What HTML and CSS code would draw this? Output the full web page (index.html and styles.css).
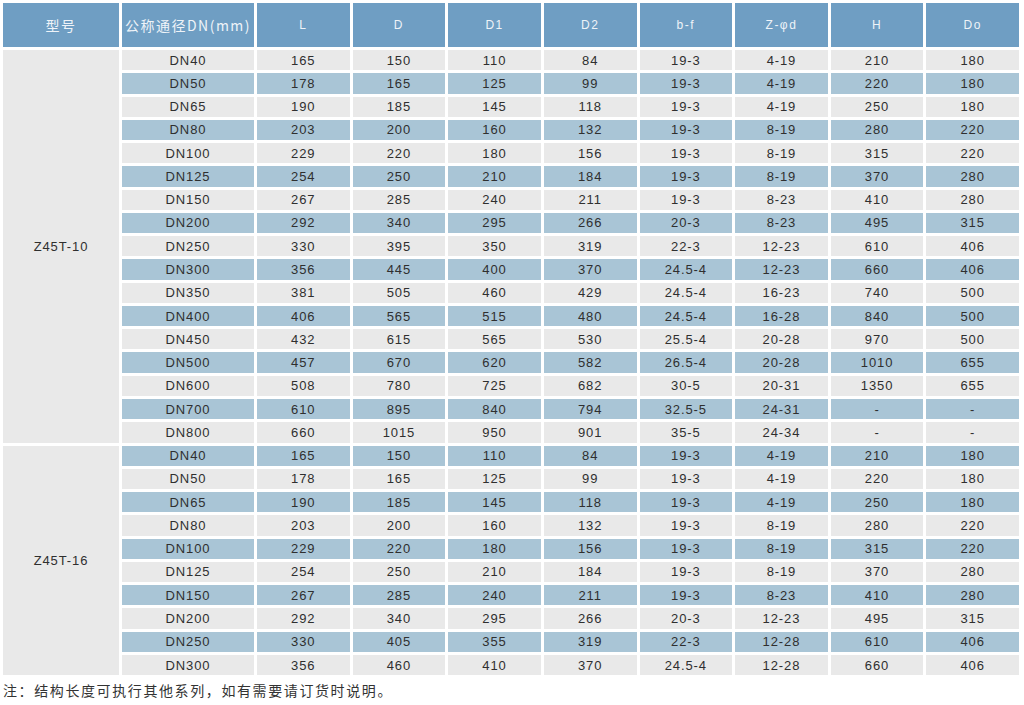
FILE: index.html
```html
<!DOCTYPE html>
<html lang="zh">
<head>
<meta charset="utf-8">
<title>Z45T 规格表</title>
<link rel="stylesheet" href="styles.css">
</head>
<body>
<table class="spec">
  <colgroup>
    <col class="c-model"><col class="c-dn">
    <col><col><col><col><col><col><col><col>
  </colgroup>
  <thead>
    <tr>
      <th class="cn">型号</th><th class="cn">公称通径DN(mm)</th>
      <th>L</th><th>D</th><th>D1</th><th>D2</th><th>b-f</th><th>Z-φd</th><th>H</th><th>Do</th>
    </tr>
  </thead>
  <tbody>
    <tr class="g"><td class="model" rowspan="17">Z45T-10</td><td>DN40</td><td>165</td><td>150</td><td>110</td><td>84</td><td>19-3</td><td>4-19</td><td>210</td><td>180</td></tr>
    <tr class="b"><td>DN50</td><td>178</td><td>165</td><td>125</td><td>99</td><td>19-3</td><td>4-19</td><td>220</td><td>180</td></tr>
    <tr class="g"><td>DN65</td><td>190</td><td>185</td><td>145</td><td>118</td><td>19-3</td><td>4-19</td><td>250</td><td>180</td></tr>
    <tr class="b"><td>DN80</td><td>203</td><td>200</td><td>160</td><td>132</td><td>19-3</td><td>8-19</td><td>280</td><td>220</td></tr>
    <tr class="g"><td>DN100</td><td>229</td><td>220</td><td>180</td><td>156</td><td>19-3</td><td>8-19</td><td>315</td><td>220</td></tr>
    <tr class="b"><td>DN125</td><td>254</td><td>250</td><td>210</td><td>184</td><td>19-3</td><td>8-19</td><td>370</td><td>280</td></tr>
    <tr class="g"><td>DN150</td><td>267</td><td>285</td><td>240</td><td>211</td><td>19-3</td><td>8-23</td><td>410</td><td>280</td></tr>
    <tr class="b"><td>DN200</td><td>292</td><td>340</td><td>295</td><td>266</td><td>20-3</td><td>8-23</td><td>495</td><td>315</td></tr>
    <tr class="g"><td>DN250</td><td>330</td><td>395</td><td>350</td><td>319</td><td>22-3</td><td>12-23</td><td>610</td><td>406</td></tr>
    <tr class="b"><td>DN300</td><td>356</td><td>445</td><td>400</td><td>370</td><td>24.5-4</td><td>12-23</td><td>660</td><td>406</td></tr>
    <tr class="g"><td>DN350</td><td>381</td><td>505</td><td>460</td><td>429</td><td>24.5-4</td><td>16-23</td><td>740</td><td>500</td></tr>
    <tr class="b"><td>DN400</td><td>406</td><td>565</td><td>515</td><td>480</td><td>24.5-4</td><td>16-28</td><td>840</td><td>500</td></tr>
    <tr class="g"><td>DN450</td><td>432</td><td>615</td><td>565</td><td>530</td><td>25.5-4</td><td>20-28</td><td>970</td><td>500</td></tr>
    <tr class="b"><td>DN500</td><td>457</td><td>670</td><td>620</td><td>582</td><td>26.5-4</td><td>20-28</td><td>1010</td><td>655</td></tr>
    <tr class="g"><td>DN600</td><td>508</td><td>780</td><td>725</td><td>682</td><td>30-5</td><td>20-31</td><td>1350</td><td>655</td></tr>
    <tr class="b"><td>DN700</td><td>610</td><td>895</td><td>840</td><td>794</td><td>32.5-5</td><td>24-31</td><td>-</td><td>-</td></tr>
    <tr class="g"><td>DN800</td><td>660</td><td>1015</td><td>950</td><td>901</td><td>35-5</td><td>24-34</td><td>-</td><td>-</td></tr>

    <tr class="b"><td class="model" rowspan="10">Z45T-16</td><td>DN40</td><td>165</td><td>150</td><td>110</td><td>84</td><td>19-3</td><td>4-19</td><td>210</td><td>180</td></tr>
    <tr class="g"><td>DN50</td><td>178</td><td>165</td><td>125</td><td>99</td><td>19-3</td><td>4-19</td><td>220</td><td>180</td></tr>
    <tr class="b"><td>DN65</td><td>190</td><td>185</td><td>145</td><td>118</td><td>19-3</td><td>4-19</td><td>250</td><td>180</td></tr>
    <tr class="g"><td>DN80</td><td>203</td><td>200</td><td>160</td><td>132</td><td>19-3</td><td>8-19</td><td>280</td><td>220</td></tr>
    <tr class="b"><td>DN100</td><td>229</td><td>220</td><td>180</td><td>156</td><td>19-3</td><td>8-19</td><td>315</td><td>220</td></tr>
    <tr class="g"><td>DN125</td><td>254</td><td>250</td><td>210</td><td>184</td><td>19-3</td><td>8-19</td><td>370</td><td>280</td></tr>
    <tr class="b"><td>DN150</td><td>267</td><td>285</td><td>240</td><td>211</td><td>19-3</td><td>8-23</td><td>410</td><td>280</td></tr>
    <tr class="g"><td>DN200</td><td>292</td><td>340</td><td>295</td><td>266</td><td>20-3</td><td>12-23</td><td>495</td><td>315</td></tr>
    <tr class="b"><td>DN250</td><td>330</td><td>405</td><td>355</td><td>319</td><td>22-3</td><td>12-28</td><td>610</td><td>406</td></tr>
    <tr class="g"><td>DN300</td><td>356</td><td>460</td><td>410</td><td>370</td><td>24.5-4</td><td>12-28</td><td>660</td><td>406</td></tr>
  </tbody>
</table>
<p class="note">注：结构长度可执行其他系列，如有需要请订货时说明。</p>
</body>
</html>
```

FILE: styles.css
```css
html, body {
  margin: 0;
  padding: 0;
  background: #ffffff;
}

body {
  font-family: "Liberation Sans", "Noto Sans CJK SC", sans-serif;
  color: #333333;
}

.spec {
  width: 1022px;
  table-layout: fixed;
  border-collapse: separate;
  border-spacing: 3px;
}

.c-model { width: 116px; }
.c-dn { width: 132px; }

.spec th {
  height: 44px;
  padding: 0;
  background: #6f9ec3;
  color: #eef3f8;
  font-weight: normal;
  font-size: 12px;
  letter-spacing: 1.5px;
  text-align: center;
  vertical-align: middle;
}

.spec th.cn {
  font-family: "Noto Sans CJK SC", sans-serif;
  font-size: 14px;
  letter-spacing: 1.5px;
}

.spec td {
  height: 20.28px;
  padding: 0;
  font-size: 13px;
  letter-spacing: 0.9px;
  line-height: 15px;
  text-align: center;
  vertical-align: middle;
  color: #2f2f2f;
}

.spec tr.g td { background: #e9e9e9; }
.spec tr.b td { background: #a9c5d6; }
.spec tr td.model { background: #e9e9e9; }

.note {
  margin: 3px 0 0 3px;
  font-family: "Noto Sans CJK SC", sans-serif;
  font-size: 14px;
  letter-spacing: 1.6px;
  line-height: 18px;
  color: #333333;
}
```
